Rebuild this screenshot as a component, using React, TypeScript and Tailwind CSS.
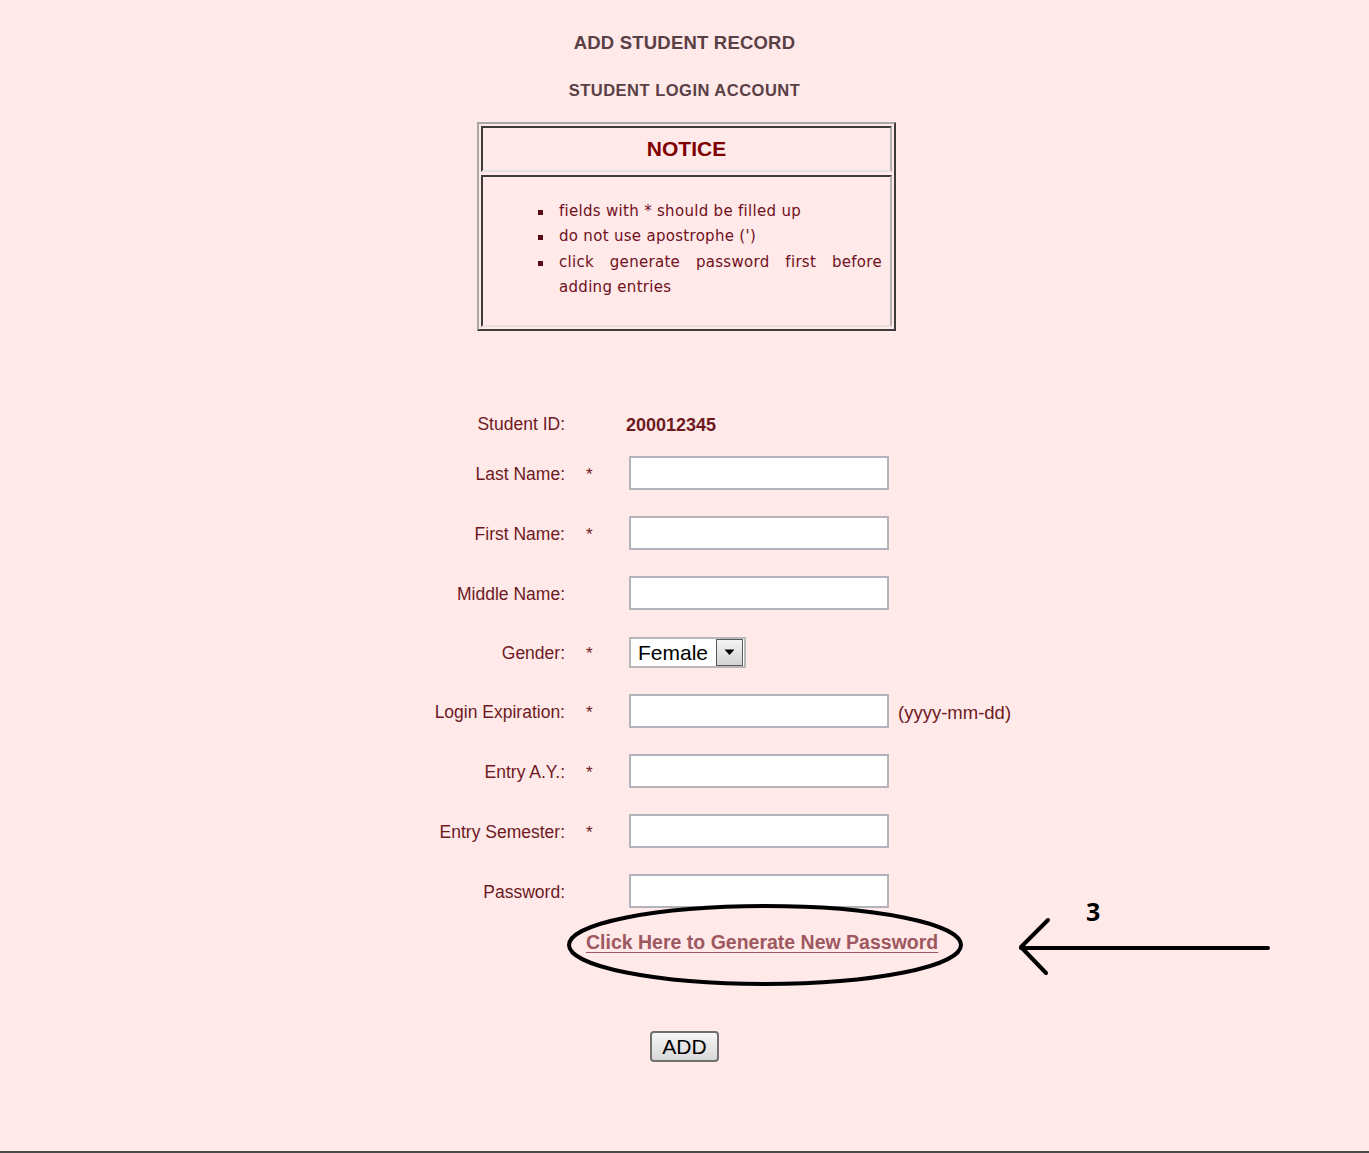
import React from "react";

const labelCls =
  "w-[166px] text-right text-[17.5px] text-[#6e1a1f] leading-none pt-[3px]";
const starCls = "w-[64px] pl-[21px] text-[17px] text-[#6e1a1f] leading-none pt-[3px]";

function Field() {
  return <div className="w-[260px] h-[34px] bg-white border-2 border-[#b3b3bb]" />;
}

function Row({
  label,
  star,
  h = "h-[60px]",
  children,
}: {
  label: string;
  star?: boolean;
  h?: string;
  children: React.ReactNode;
}) {
  return (
    <div className={`flex items-center ${h}`}>
      <div className={labelCls}>{label}</div>
      <div className={starCls}>{star ? "*" : ""}</div>
      {children}
    </div>
  );
}

export default function App() {
  return (
    <div
      className="relative h-[1153px] w-full bg-[#ffe9e9] border-b-2 border-[#4a4a4a] flex flex-col items-center overflow-hidden"
      style={{ fontFamily: '"Liberation Sans", Arial, sans-serif' }}
    >
      <div className="mt-[31px] h-[24px] leading-[24px] text-[18.5px] font-bold tracking-[0.2px] text-[#5a3f45]">
        ADD STUDENT RECORD
      </div>
      <div className="mt-[24px] h-[22px] leading-[22px] text-[16.5px] font-bold tracking-[0.5px] text-[#5a3f45]">
        STUDENT LOGIN ACCOUNT
      </div>

      {/* Notice table */}
      <div className="mt-[21px] ml-[4px] w-[419px] border-2 border-t-[#a8a8a8] border-l-[#a8a8a8] border-b-[#3c3c3c] border-r-[#3c3c3c] p-[2px] flex flex-col gap-[3px]">
        <div className="h-[46px] border-2 border-t-[#3c3c3c] border-l-[#3c3c3c] border-b-[#e8e0e0] border-r-[#b8b0b0] flex items-center justify-center">
          <span className="text-[21px] font-bold text-[#800000]">NOTICE</span>
        </div>
        <div className="h-[152px] border-2 border-t-[#3c3c3c] border-l-[#3c3c3c] border-b-[#e8e0e0] border-r-[#b8b0b0] pt-[22px] pl-[55px] pr-[8px]">
          <ul
            className="text-[15px] leading-[25.3px] tracking-[0.3px] text-[#701020]"
            style={{ fontFamily: '"DejaVu Sans", Verdana, sans-serif' }}
          >
            {[
              "fields with * should be filled up",
              "do not use apostrophe (')",
              "click generate password first before adding entries",
            ].map((t) => (
              <li key={t} className="flex">
                <span className="w-[5px] h-[5px] bg-[#5a0a14] mt-[11px] shrink-0" />
                <span className="ml-[16px] flex-1 text-justify">{t}</span>
              </li>
            ))}
          </ul>
        </div>
      </div>

      {/* Form */}
      <div className="self-stretch pl-[399px] mt-[72px] flex flex-col">
        <Row label="Student ID:" h="h-[40px]">
          <div className="-ml-[3px] pt-[3px] text-[18px] font-bold text-[#6e1a1f] leading-none">
            200012345
          </div>
        </Row>
        <Row label="Last Name:" star>
          <Field />
        </Row>
        <Row label="First Name:" star>
          <Field />
        </Row>
        <Row label="Middle Name:">
          <Field />
        </Row>
        <Row label="Gender:" star h="h-[58px]">
          <div className="w-[117px] h-[31px] bg-white border-2 border-[#b8b8b8] flex items-center justify-between">
            <span className="pl-[7px] text-[21px] text-black leading-none">Female</span>
            <span className="mr-[1px] w-[27px] h-[27px] border border-[#5a5a5a] bg-gradient-to-b from-[#f4f4f4] to-[#d4d4d4] flex items-center justify-center">
              <svg width="11" height="7" viewBox="0 0 11 7">
                <path d="M0.5 0.5 L10.5 0.5 L5.5 6 Z" fill="#000" />
              </svg>
            </span>
          </div>
        </Row>
        <Row label="Login Expiration:" star>
          <Field />
          <span className="ml-[9px] pt-[5px] text-[18.5px] text-[#6e1a1f] leading-none">
            (yyyy-mm-dd)
          </span>
        </Row>
        <Row label="Entry A.Y.:" star>
          <Field />
        </Row>
        <Row label="Entry Semester:" star>
          <Field />
        </Row>
        <Row label="Password:">
          <Field />
        </Row>
        <div className="h-[44px] flex items-center pl-[187px]">
          <a
            href="#"
            className="text-[19.5px] font-bold text-[#9e5860] underline underline-offset-[3px] leading-none"
          >
            Click Here to Generate New Password
          </a>
        </div>
      </div>

      <button className="mt-[66px] w-[69px] h-[31px] rounded-[4px] border-2 border-[#707070] bg-gradient-to-b from-[#f6f6f6] to-[#d8d8d8] text-[21px] text-black leading-none">
        ADD
      </button>

      {/* Annotation overlay */}
      <svg
        className="absolute left-0 top-0 pointer-events-none"
        width="1369"
        height="1153"
        viewBox="0 0 1369 1153"
      >
        <ellipse
          cx="765"
          cy="945"
          rx="196"
          ry="39"
          fill="none"
          stroke="#000"
          strokeWidth="4"
        />
        <line x1="1021" y1="948" x2="1268" y2="948" stroke="#000" strokeWidth="4" strokeLinecap="round" />
        <polyline
          points="1048,920 1021,947 1046,973"
          fill="none"
          stroke="#000"
          strokeWidth="4"
          strokeLinecap="round"
          strokeLinejoin="round"
        />
      </svg>
      <div
        className="absolute left-[1086px] top-[899px] text-[25px] font-bold text-black leading-none"
        style={{ fontFamily: '"Open Sans", "Liberation Sans", sans-serif' }}
      >
        3
      </div>
    </div>
  );
}
